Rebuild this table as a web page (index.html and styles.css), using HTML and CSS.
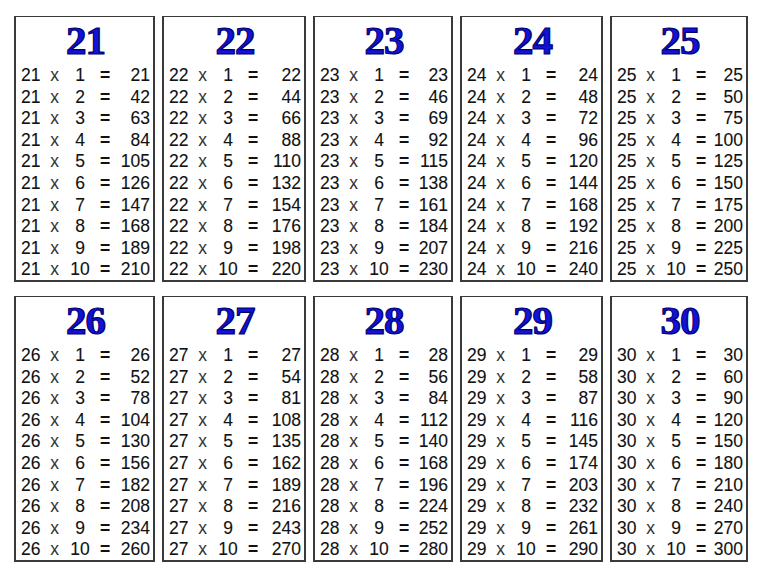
FILE: index.html
```html
<!DOCTYPE html>
<html>
<head>
<meta charset="utf-8">
<link rel="stylesheet" href="styles.css">
</head>
<body>
<div class="sheet">
<div class="card"><div class="title">21</div>
<div class="r"><span>21</span><span>x</span><span>1</span><span>=</span><span>21</span></div>
<div class="r"><span>21</span><span>x</span><span>2</span><span>=</span><span>42</span></div>
<div class="r"><span>21</span><span>x</span><span>3</span><span>=</span><span>63</span></div>
<div class="r"><span>21</span><span>x</span><span>4</span><span>=</span><span>84</span></div>
<div class="r"><span>21</span><span>x</span><span>5</span><span>=</span><span>105</span></div>
<div class="r"><span>21</span><span>x</span><span>6</span><span>=</span><span>126</span></div>
<div class="r"><span>21</span><span>x</span><span>7</span><span>=</span><span>147</span></div>
<div class="r"><span>21</span><span>x</span><span>8</span><span>=</span><span>168</span></div>
<div class="r"><span>21</span><span>x</span><span>9</span><span>=</span><span>189</span></div>
<div class="r"><span>21</span><span>x</span><span>10</span><span>=</span><span>210</span></div>
</div>
<div class="card"><div class="title">22</div>
<div class="r"><span>22</span><span>x</span><span>1</span><span>=</span><span>22</span></div>
<div class="r"><span>22</span><span>x</span><span>2</span><span>=</span><span>44</span></div>
<div class="r"><span>22</span><span>x</span><span>3</span><span>=</span><span>66</span></div>
<div class="r"><span>22</span><span>x</span><span>4</span><span>=</span><span>88</span></div>
<div class="r"><span>22</span><span>x</span><span>5</span><span>=</span><span>110</span></div>
<div class="r"><span>22</span><span>x</span><span>6</span><span>=</span><span>132</span></div>
<div class="r"><span>22</span><span>x</span><span>7</span><span>=</span><span>154</span></div>
<div class="r"><span>22</span><span>x</span><span>8</span><span>=</span><span>176</span></div>
<div class="r"><span>22</span><span>x</span><span>9</span><span>=</span><span>198</span></div>
<div class="r"><span>22</span><span>x</span><span>10</span><span>=</span><span>220</span></div>
</div>
<div class="card"><div class="title">23</div>
<div class="r"><span>23</span><span>x</span><span>1</span><span>=</span><span>23</span></div>
<div class="r"><span>23</span><span>x</span><span>2</span><span>=</span><span>46</span></div>
<div class="r"><span>23</span><span>x</span><span>3</span><span>=</span><span>69</span></div>
<div class="r"><span>23</span><span>x</span><span>4</span><span>=</span><span>92</span></div>
<div class="r"><span>23</span><span>x</span><span>5</span><span>=</span><span>115</span></div>
<div class="r"><span>23</span><span>x</span><span>6</span><span>=</span><span>138</span></div>
<div class="r"><span>23</span><span>x</span><span>7</span><span>=</span><span>161</span></div>
<div class="r"><span>23</span><span>x</span><span>8</span><span>=</span><span>184</span></div>
<div class="r"><span>23</span><span>x</span><span>9</span><span>=</span><span>207</span></div>
<div class="r"><span>23</span><span>x</span><span>10</span><span>=</span><span>230</span></div>
</div>
<div class="card"><div class="title">24</div>
<div class="r"><span>24</span><span>x</span><span>1</span><span>=</span><span>24</span></div>
<div class="r"><span>24</span><span>x</span><span>2</span><span>=</span><span>48</span></div>
<div class="r"><span>24</span><span>x</span><span>3</span><span>=</span><span>72</span></div>
<div class="r"><span>24</span><span>x</span><span>4</span><span>=</span><span>96</span></div>
<div class="r"><span>24</span><span>x</span><span>5</span><span>=</span><span>120</span></div>
<div class="r"><span>24</span><span>x</span><span>6</span><span>=</span><span>144</span></div>
<div class="r"><span>24</span><span>x</span><span>7</span><span>=</span><span>168</span></div>
<div class="r"><span>24</span><span>x</span><span>8</span><span>=</span><span>192</span></div>
<div class="r"><span>24</span><span>x</span><span>9</span><span>=</span><span>216</span></div>
<div class="r"><span>24</span><span>x</span><span>10</span><span>=</span><span>240</span></div>
</div>
<div class="card"><div class="title">25</div>
<div class="r"><span>25</span><span>x</span><span>1</span><span>=</span><span>25</span></div>
<div class="r"><span>25</span><span>x</span><span>2</span><span>=</span><span>50</span></div>
<div class="r"><span>25</span><span>x</span><span>3</span><span>=</span><span>75</span></div>
<div class="r"><span>25</span><span>x</span><span>4</span><span>=</span><span>100</span></div>
<div class="r"><span>25</span><span>x</span><span>5</span><span>=</span><span>125</span></div>
<div class="r"><span>25</span><span>x</span><span>6</span><span>=</span><span>150</span></div>
<div class="r"><span>25</span><span>x</span><span>7</span><span>=</span><span>175</span></div>
<div class="r"><span>25</span><span>x</span><span>8</span><span>=</span><span>200</span></div>
<div class="r"><span>25</span><span>x</span><span>9</span><span>=</span><span>225</span></div>
<div class="r"><span>25</span><span>x</span><span>10</span><span>=</span><span>250</span></div>
</div>
<div class="card"><div class="title">26</div>
<div class="r"><span>26</span><span>x</span><span>1</span><span>=</span><span>26</span></div>
<div class="r"><span>26</span><span>x</span><span>2</span><span>=</span><span>52</span></div>
<div class="r"><span>26</span><span>x</span><span>3</span><span>=</span><span>78</span></div>
<div class="r"><span>26</span><span>x</span><span>4</span><span>=</span><span>104</span></div>
<div class="r"><span>26</span><span>x</span><span>5</span><span>=</span><span>130</span></div>
<div class="r"><span>26</span><span>x</span><span>6</span><span>=</span><span>156</span></div>
<div class="r"><span>26</span><span>x</span><span>7</span><span>=</span><span>182</span></div>
<div class="r"><span>26</span><span>x</span><span>8</span><span>=</span><span>208</span></div>
<div class="r"><span>26</span><span>x</span><span>9</span><span>=</span><span>234</span></div>
<div class="r"><span>26</span><span>x</span><span>10</span><span>=</span><span>260</span></div>
</div>
<div class="card"><div class="title">27</div>
<div class="r"><span>27</span><span>x</span><span>1</span><span>=</span><span>27</span></div>
<div class="r"><span>27</span><span>x</span><span>2</span><span>=</span><span>54</span></div>
<div class="r"><span>27</span><span>x</span><span>3</span><span>=</span><span>81</span></div>
<div class="r"><span>27</span><span>x</span><span>4</span><span>=</span><span>108</span></div>
<div class="r"><span>27</span><span>x</span><span>5</span><span>=</span><span>135</span></div>
<div class="r"><span>27</span><span>x</span><span>6</span><span>=</span><span>162</span></div>
<div class="r"><span>27</span><span>x</span><span>7</span><span>=</span><span>189</span></div>
<div class="r"><span>27</span><span>x</span><span>8</span><span>=</span><span>216</span></div>
<div class="r"><span>27</span><span>x</span><span>9</span><span>=</span><span>243</span></div>
<div class="r"><span>27</span><span>x</span><span>10</span><span>=</span><span>270</span></div>
</div>
<div class="card"><div class="title">28</div>
<div class="r"><span>28</span><span>x</span><span>1</span><span>=</span><span>28</span></div>
<div class="r"><span>28</span><span>x</span><span>2</span><span>=</span><span>56</span></div>
<div class="r"><span>28</span><span>x</span><span>3</span><span>=</span><span>84</span></div>
<div class="r"><span>28</span><span>x</span><span>4</span><span>=</span><span>112</span></div>
<div class="r"><span>28</span><span>x</span><span>5</span><span>=</span><span>140</span></div>
<div class="r"><span>28</span><span>x</span><span>6</span><span>=</span><span>168</span></div>
<div class="r"><span>28</span><span>x</span><span>7</span><span>=</span><span>196</span></div>
<div class="r"><span>28</span><span>x</span><span>8</span><span>=</span><span>224</span></div>
<div class="r"><span>28</span><span>x</span><span>9</span><span>=</span><span>252</span></div>
<div class="r"><span>28</span><span>x</span><span>10</span><span>=</span><span>280</span></div>
</div>
<div class="card"><div class="title">29</div>
<div class="r"><span>29</span><span>x</span><span>1</span><span>=</span><span>29</span></div>
<div class="r"><span>29</span><span>x</span><span>2</span><span>=</span><span>58</span></div>
<div class="r"><span>29</span><span>x</span><span>3</span><span>=</span><span>87</span></div>
<div class="r"><span>29</span><span>x</span><span>4</span><span>=</span><span>116</span></div>
<div class="r"><span>29</span><span>x</span><span>5</span><span>=</span><span>145</span></div>
<div class="r"><span>29</span><span>x</span><span>6</span><span>=</span><span>174</span></div>
<div class="r"><span>29</span><span>x</span><span>7</span><span>=</span><span>203</span></div>
<div class="r"><span>29</span><span>x</span><span>8</span><span>=</span><span>232</span></div>
<div class="r"><span>29</span><span>x</span><span>9</span><span>=</span><span>261</span></div>
<div class="r"><span>29</span><span>x</span><span>10</span><span>=</span><span>290</span></div>
</div>
<div class="card"><div class="title">30</div>
<div class="r"><span>30</span><span>x</span><span>1</span><span>=</span><span>30</span></div>
<div class="r"><span>30</span><span>x</span><span>2</span><span>=</span><span>60</span></div>
<div class="r"><span>30</span><span>x</span><span>3</span><span>=</span><span>90</span></div>
<div class="r"><span>30</span><span>x</span><span>4</span><span>=</span><span>120</span></div>
<div class="r"><span>30</span><span>x</span><span>5</span><span>=</span><span>150</span></div>
<div class="r"><span>30</span><span>x</span><span>6</span><span>=</span><span>180</span></div>
<div class="r"><span>30</span><span>x</span><span>7</span><span>=</span><span>210</span></div>
<div class="r"><span>30</span><span>x</span><span>8</span><span>=</span><span>240</span></div>
<div class="r"><span>30</span><span>x</span><span>9</span><span>=</span><span>270</span></div>
<div class="r"><span>30</span><span>x</span><span>10</span><span>=</span><span>300</span></div>
</div>
</div>
</body>
</html>
```

FILE: styles.css
```css
html, body {
  margin: 0;
  padding: 0;
  background: #ffffff;
}

.sheet {
  display: grid;
  grid-template-columns: 141px 144px 140px 143px 138px;
  grid-auto-rows: 266px;
  column-gap: 7px;
  row-gap: 14px;
  padding: 16px 0 0 14px;
}

.card {
  box-sizing: border-box;
  border: 2px solid #3a3a3a;
  border-top-width: 1px;
  padding: 0 3px 0 5px;
  background: #fff;
}

.title {
  height: 48px;
  line-height: 46px;
  text-align: center;
  font-family: "Liberation Serif", "DejaVu Serif", serif;
  font-weight: bold;
  font-size: 41px;
  color: #1212d8;
  -webkit-text-stroke: 1.2px #000070;
  letter-spacing: -1px;
}

.r {
  display: grid;
  grid-template-columns: 28px 11px 40px 10px 1fr;
  height: 21.6px;
  line-height: 21.6px;
  font-family: "Liberation Sans", Arial, sans-serif;
  font-size: 17.5px;
  color: #111111;
  -webkit-text-stroke: 0.1px #111111;
}

.r span:nth-child(1) { text-align: left; }
.r span:nth-child(2) { text-align: center; color: #333; -webkit-text-stroke: 0; }
.r span:nth-child(3) { text-align: center; }
.r span:nth-child(4) { text-align: center; font-weight: bold; }
.r span:nth-child(5) { text-align: right; }
```
